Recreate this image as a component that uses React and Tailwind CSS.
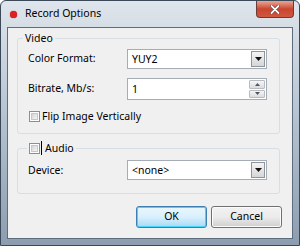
import React from "react";

function Combo({ value, className = "" }) {
    return (
        <div className={`h-[20px] bg-white border border-[#a5acb5] flex items-center pl-[4px] pr-[1px] ${className}`}>
            <span className="flex-1 text-[10.5px] leading-none text-black">{value}</span>
            <div className="w-[14px] h-[16px] border border-[#8f959c] bg-gradient-to-b from-[#f4f4f4] to-[#d6d6d6] flex items-center justify-center">
                <svg width="7" height="4" viewBox="0 0 7 4"><path d="M0 0h7L3.5 4z" fill="#111" /></svg>
            </div>
        </div>
    );
}

function Check() {
    return (
        <div className="w-[11px] h-[11px] shrink-0 border border-[#8e8f8f] bg-white p-[1px]">
            <div className="w-full h-full bg-gradient-to-br from-[#d4d4d4] to-[#f6f6f6] border border-[#c8c8c8]" />
        </div>
    );
}

function SpinButton({ up }) {
    return (
        <div className={`flex-1 border border-[#b8bcc2] rounded-[1px] bg-gradient-to-b from-[#f6f6f6] to-[#dcdcdc] flex items-center justify-center ${up ? "" : "mt-[1px]"}`}>
            <svg width="5" height="3" viewBox="0 0 5 3">
                <path d={up ? "M0 3h5L2.5 0z" : "M0 0h5L2.5 3z"} fill="#4f5560" />
            </svg>
        </div>
    );
}

export default function App() {
    return (
        <div className="w-[300px] h-[246px] bg-white" style={{ fontFamily: '"Noto Sans", "Open Sans", sans-serif' }}>
            <div className="w-full h-full flex flex-col rounded-t-[6px] border border-[#3b4858] bg-gradient-to-b from-[#dfe5ec] via-[#b3c1cf] to-[#8d9db0]">
                {/* Title bar */}
                <div className="h-[26px] flex items-start">
                    <div className="flex items-center h-[26px] pl-[9px] gap-[8px]">
                        <div className="w-[7px] h-[7px] rounded-full bg-[#e02020] shadow-[0_0_1px_#800]" />
                        <span className="text-[10.5px] text-black">Record Options</span>
                    </div>
                    <div className="ml-auto mr-[5px] w-[38px] h-[17px] rounded-b-[4px] border border-t-0 border-[#6d3a3a] bg-gradient-to-b from-[#e8a593] via-[#c9452f] to-[#d0573f] flex items-center justify-center">
                        <svg width="10" height="9" viewBox="0 0 10 9">
                            <path d="M1.5 1l7 7M8.5 1l-7 7" stroke="#5a2a2a" strokeWidth="3" strokeLinecap="round" />
                            <path d="M1.5 1l7 7M8.5 1l-7 7" stroke="#fff" strokeWidth="1.8" strokeLinecap="round" />
                        </svg>
                    </div>
                </div>

                {/* Client area */}
                <div className="flex-1 mx-[6px] mb-[6px] border border-[#5e6d7e] bg-[#f0f0f0] px-[9px] flex flex-col">
                    <fieldset className="mt-[3px] mr-[3px] border border-[#d5dfe5] rounded-[3px] px-0 pb-[10px]">
                        <legend className="ml-[5px] px-[2px] text-[10.5px] leading-[14px] text-black">Video</legend>
                        <div className="pl-[10px] pr-[12px]">
                            <div className="flex items-center h-[20px] mt-[4px]">
                                <span className="w-[99px] text-[10.5px] text-black">Color Format:</span>
                                <Combo value="YUY2" className="flex-1" />
                            </div>
                            <div className="flex items-center h-[22px] mt-[9px]">
                                <span className="w-[99px] text-[10.5px] text-black">Bitrate, Mb/s:</span>
                                <div className="flex-1 h-[22px] bg-white border border-[#a5acb5] flex items-center pl-[4px] pr-[1px] py-[1px]">
                                    <span className="flex-1 text-[10.5px] leading-none">1</span>
                                    <div className="flex flex-col w-[16px] h-full">
                                        <SpinButton up />
                                        <SpinButton />
                                    </div>
                                </div>
                            </div>
                            <div className="flex items-center h-[13px] mt-[10px] gap-[2px] pl-[1px]">
                                <Check />
                                <span className="text-[10.5px] leading-none text-black">Flip Image Vertically</span>
                            </div>
                        </div>
                    </fieldset>

                    <fieldset className="mt-[7px] mr-[3px] border border-[#d5dfe5] rounded-[3px] px-0 pb-[13px]">
                        <legend className="ml-[9px] px-[2px] text-[10.5px] leading-[14px] text-black flex items-center">
                            <Check />
                            <span className="w-[1px] h-[14px] bg-black ml-[1px] mr-[3px]" />
                            <span>Audio</span>
                        </legend>
                        <div className="pl-[10px] pr-[12px]">
                            <div className="flex items-center h-[20px] mt-[5px]">
                                <span className="w-[99px] text-[10.5px] text-black pt-[2px]">Device:</span>
                                <Combo value="<none>" className="flex-1" />
                            </div>
                        </div>
                    </fieldset>

                    <div className="flex justify-end gap-[4px] mt-[12px] pr-[1px]">
                        <button className="w-[71px] h-[22px] rounded-[3px] border border-[#3c7fb1] shadow-[inset_0_0_0_1px_#48d3fb] bg-gradient-to-b from-[#eaf6fd] via-[#d9f0fc] to-[#a7d9f5] text-[10.5px] text-black">OK</button>
                        <button className="w-[71px] h-[22px] rounded-[3px] border border-[#707070] shadow-[inset_0_0_0_1px_#fcfcfc] bg-gradient-to-b from-[#f2f2f2] via-[#ebebeb] to-[#cfcfcf] text-[10.5px] text-black">Cancel</button>
                    </div>
                </div>
            </div>
        </div>
    );
}
